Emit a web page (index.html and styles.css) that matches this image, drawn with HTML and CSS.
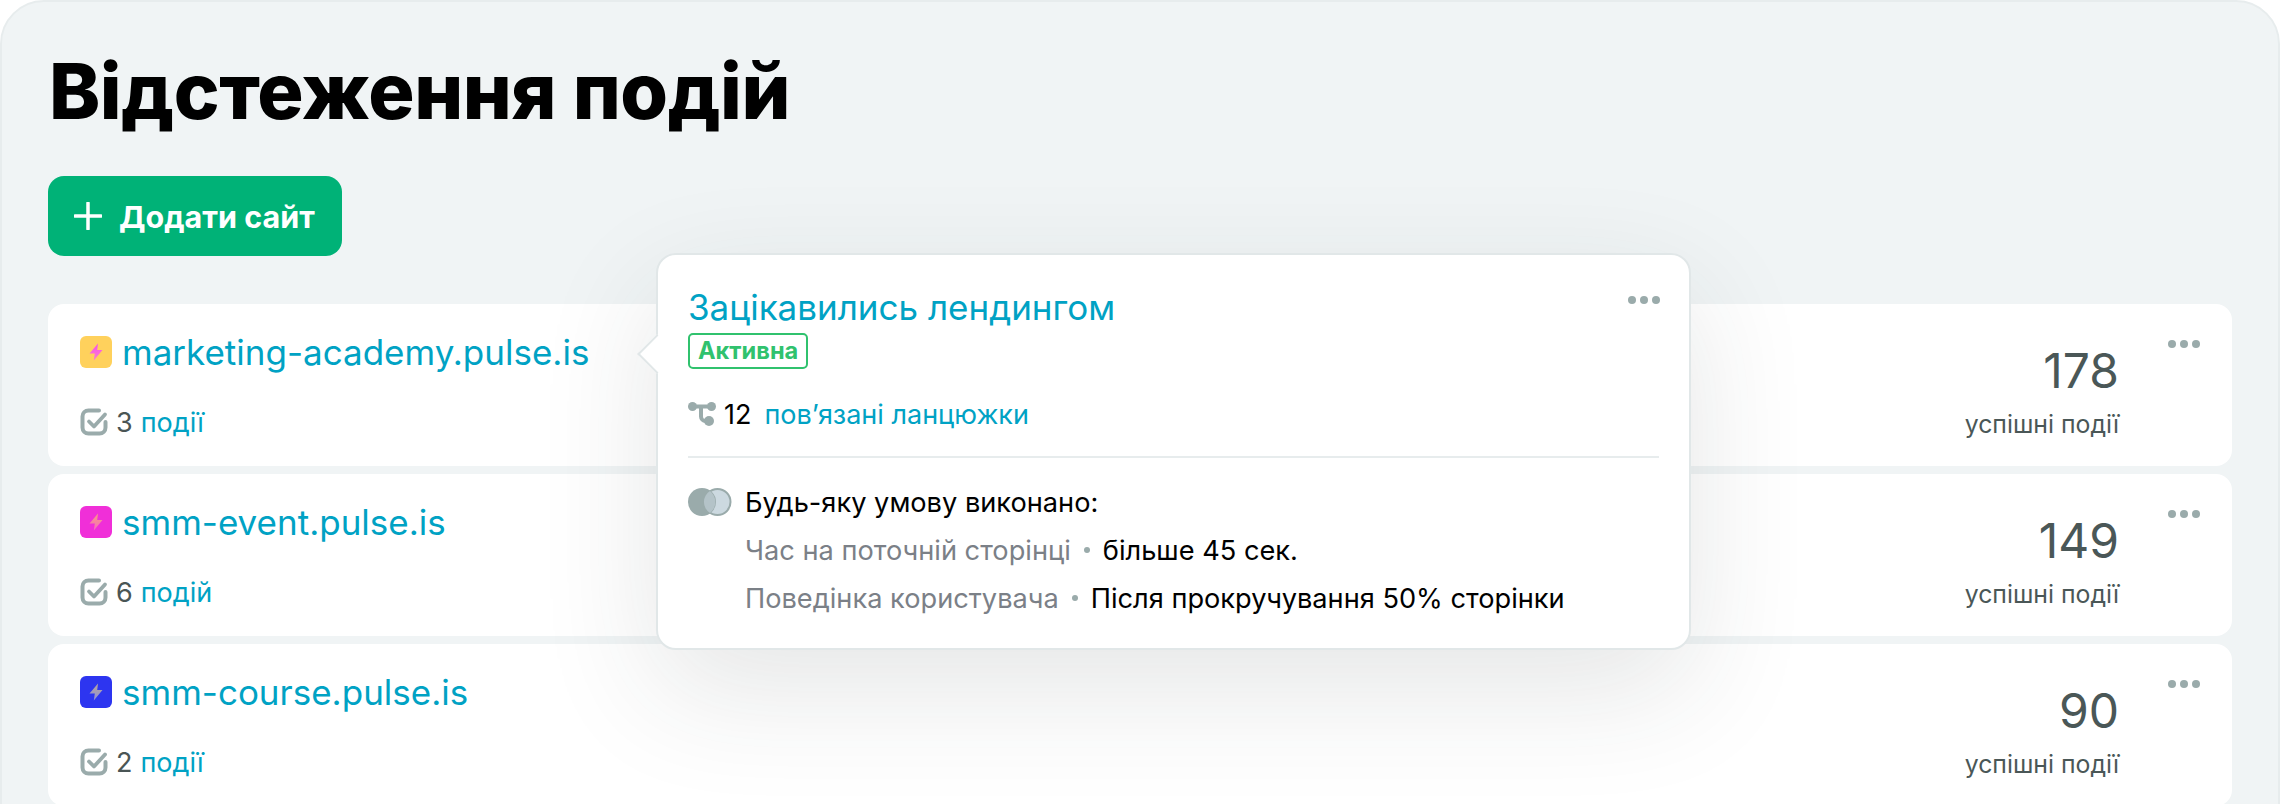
FILE: index.html
```html
<!DOCTYPE html>
<html lang="uk">
<head>
<meta charset="utf-8">
<title>Відстеження подій</title>
<link rel="stylesheet" href="styles.css">
</head>
<body>
<svg class="defs" width="0" height="0" aria-hidden="true">
  <defs>
    <linearGradient id="b1" x1="0" y1="0" x2="0" y2="1"><stop offset="0" stop-color="#f84fe8"/><stop offset="1" stop-color="#fb7fd0"/></linearGradient>
    <linearGradient id="b2" x1="0" y1="0" x2="0" y2="1"><stop offset="0" stop-color="#fa9a80"/><stop offset="1" stop-color="#f66cc0"/></linearGradient>
    <linearGradient id="b3" x1="0" y1="0" x2="0" y2="1"><stop offset="0" stop-color="#b8a89a"/><stop offset="1" stop-color="#8f8fd8"/></linearGradient>
  </defs>
  <symbol id="bolt" viewBox="0 0 16 18"><path d="M10 0.500 1.500 10.500h5.300L5.800 17.500 14.500 7H9.200z"/></symbol>
  <symbol id="check" viewBox="0 0 28 28"><path d="M19 2.500H8.500a6 6 0 0 0-6 6v11a6 6 0 0 0 6 6h11a6 6 0 0 0 6-6V14" fill="none" stroke="#9aabab" stroke-width="4" stroke-linecap="round"/><path d="M9 13.500l5 5L25 6.500" fill="none" stroke="#9aabab" stroke-width="3.800" stroke-linecap="round" stroke-linejoin="round"/></symbol>
</svg>
<main class="panel">
  <h1 class="title">Відстеження подій</h1>
  <button class="add">
    <svg class="plus" width="28" height="28" viewBox="0 0 28 28"><path d="M14 1v26M1 14h26" stroke="#fff" stroke-width="3.500" stroke-linecap="round"/></svg>
    <span>Додати сайт</span>
  </button>
  <section class="cards">
    <article class="card">
      <div class="site">
        <div class="name"><span class="logo yellow"><svg width="16" height="18"><use href="#bolt"/></svg></span><a class="domain">marketing-academy.pulse.is</a></div>
        <div class="events"><svg width="28" height="28"><use href="#check"/></svg><span class="num">3</span><a class="link">події</a></div>
      </div>
      <div class="stat"><b class="count">178</b><span class="cap">успішні події</span></div>
      <div class="more"><i></i><i></i><i></i></div>
    </article>
    <article class="card">
      <div class="site">
        <div class="name"><span class="logo pink"><svg width="16" height="18"><use href="#bolt"/></svg></span><a class="domain">smm-event.pulse.is</a></div>
        <div class="events"><svg width="28" height="28"><use href="#check"/></svg><span class="num">6</span><a class="link">подій</a></div>
      </div>
      <div class="stat"><b class="count">149</b><span class="cap">успішні події</span></div>
      <div class="more"><i></i><i></i><i></i></div>
    </article>
    <article class="card">
      <div class="site">
        <div class="name"><span class="logo blue"><svg width="16" height="18"><use href="#bolt"/></svg></span><a class="domain">smm-course.pulse.is</a></div>
        <div class="events"><svg width="28" height="28"><use href="#check"/></svg><span class="num">2</span><a class="link">події</a></div>
      </div>
      <div class="stat"><b class="count">90</b><span class="cap">успішні події</span></div>
      <div class="more"><i></i><i></i><i></i></div>
    </article>
  </section>
  <aside class="pop">
    <span class="arrow"></span>
    <div class="more pop-more"><i></i><i></i><i></i></div>
    <h2 class="pop-title">Зацікавились лендингом</h2>
    <span class="badge">Активна</span>
    <div class="chains">
      <svg width="28" height="24" viewBox="0 0 28 24"><g fill="#9aabab"><circle cx="4.500" cy="4.500" r="4.500"/><circle cx="23.500" cy="4.500" r="4.500"/><circle cx="21" cy="19" r="5"/></g><path d="M4 4.500h20M13 4.500v10a4.500 4.500 0 0 0 4.500 4.500H21" fill="none" stroke="#9aabab" stroke-width="4"/></svg>
      <span class="chain-num">12</span><a class="link">пов’язані ланцюжки</a>
    </div>
    <hr class="rule">
    <div class="cond">
      <svg width="44" height="28" viewBox="0 0 44 28"><circle cx="29.500" cy="14" r="13" fill="#ccd9e0" stroke="#9aabab" stroke-width="2"/><circle cx="14" cy="14" r="14" fill="#9aabab"/><path d="M22 3a14 14 0 0 1 0 22 13 13 0 0 1 0-22z" fill="#b4c3c8"/></svg>
      <span>Будь-яку умову виконано:</span>
    </div>
    <div class="rule-row"><span class="key">Час на поточній сторінці</span><i class="sep"></i><span>більше 45 сек.</span></div>
    <div class="rule-row"><span class="key">Поведінка користувача</span><i class="sep"></i><span>Після прокручування 50% сторінки</span></div>
  </aside>
</main>
</body>
</html>
```
FILE: styles.css
```css
* { box-sizing: border-box; }
html, body { margin: 0; height: 804px; overflow: hidden; background: #fff; }
body { font-family: Inter, "Noto Sans", sans-serif; color: #000; }
.defs { position: absolute; }
.panel {
  position: relative;
  width: 2280px;
  height: 860px;
  padding: 43px 46px 0 46px;
  background: #f0f4f5;
  border: 2px solid #e7eced;
  border-radius: 44px;
}
.title { margin: 0; font-size: 77.200px; line-height: 92px; font-weight: 800; letter-spacing: -.45px; padding-left: 1px; }
.add {
  display: flex; align-items: center; gap: 17px;
  width: 294px; height: 80px; margin-top: 39px; padding: 0 0 0 26px;
  background: #00b277; border: 0; border-radius: 16px;
  color: #fff; font: 700 30.500px Inter, sans-serif;
}
.cards { display: flex; flex-direction: column; gap: 8px; margin-top: 48px; }
.card {
  display: flex; justify-content: space-between; position: relative;
  height: 162px; padding: 28px 32px 0;
  background: #fff; border-radius: 16px;
}
.name { display: flex; align-items: center; gap: 10px; height: 40px; }
.logo { display: flex; align-items: center; justify-content: center; width: 32px; height: 32px; border-radius: 6px; }
.yellow { background: #ffd15c; fill: url(#b1); }
.pink { background: #f02fd8; fill: url(#b2); }
.blue { background: #2d35f0; fill: url(#b3); }
.domain { font-size: 35px; color: #00a2c4; }
.events { display: flex; align-items: center; gap: 8px; margin-top: 33px; font-size: 27px; color: #4a5555; height: 34px; }
.link { color: #00a2c4; }
.stat { display: flex; flex-direction: column; align-items: flex-end; margin-right: 81px; padding-top: 11px; }
.count { font-weight: 400; font-size: 48px; line-height: 56px; color: #4a5757; }
.cap { font-size: 24.800px; line-height: 36px; margin-top: 7px; color: #4a5757; }
.more { position: absolute; top: 36px; right: 32px; display: flex; gap: 4px; }
.more i { width: 8px; height: 8px; border-radius: 50%; background: #9aabab; }
.pop {
  position: absolute; left: 654px; top: 251px;
  width: 1035px; height: 397px; padding: 30px 30px 0;
  background: #fff; border: 2px solid #e1e7e8; border-radius: 20px;
  box-shadow: 0 40px 120px rgba(40, 50, 50, .12);
}
.arrow {
  position: absolute; left: -15px; top: 85px; width: 28px; height: 28px;
  background: #fff; border-left: 2px solid #e1e7e8; border-bottom: 2px solid #e1e7e8;
  transform: rotate(45deg);
}
.pop-more { top: 41px; right: 29px; }
.pop-title { margin: 0; font-size: 35px; line-height: 44px; font-weight: 400; color: #00a2c4; }
.badge {
  display: inline-block; height: 36px; padding: 0 8px; margin-top: 4px;
  border: 2px solid #30c26e; border-radius: 5px;
  color: #30c26e; font-size: 23.600px; line-height: 32px; font-weight: 700;
}
.chains { display: flex; align-items: center; gap: 8px; margin-top: 28px; font-size: 27px; height: 34px; }
.chain-num { margin-right: 5px; }
.rule { margin: 25px 0 0; border: 0; border-top: 2px solid #e7eced; }
.cond { display: flex; align-items: center; gap: 13px; margin-top: 27px; height: 34px; font-size: 27.200px; }
.rule-row { display: flex; align-items: center; gap: 13px; margin: 14px 0 0 57px; height: 34px; font-size: 27.200px; }
.key { color: #7b8087; }
.sep { width: 6px; height: 6px; border-radius: 50%; background: #9aabab; }
```
